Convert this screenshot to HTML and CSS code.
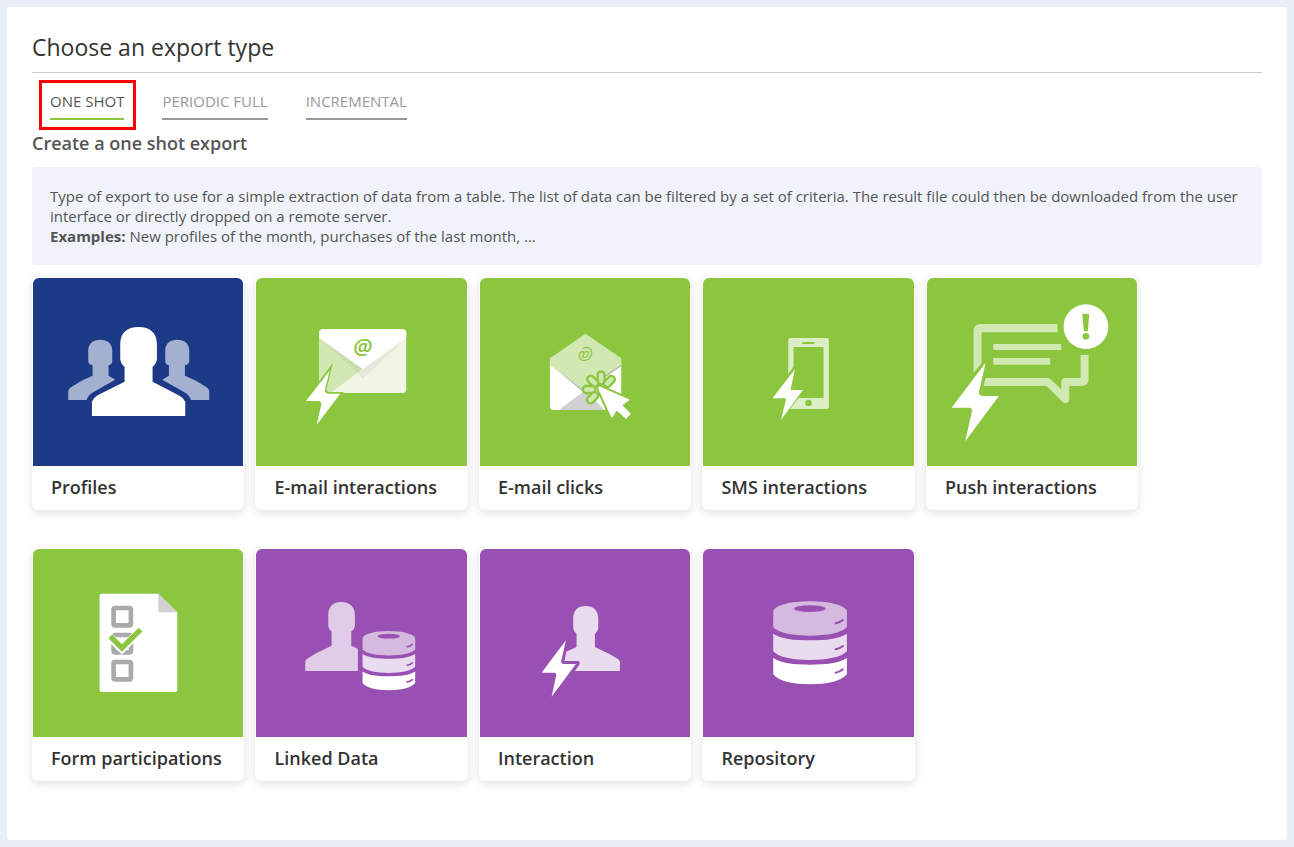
FILE: index.html
```html
<!DOCTYPE html>
<html lang="en">
<head>
<meta charset="utf-8">
<title>Choose an export type</title>
<link rel="stylesheet" href="styles.css">
</head>
<body>
<main class="panel">
  <h1 class="title">Choose an export type</h1>
  <div class="tabs" role="tablist">
    <button class="tab tab-active" type="button" role="tab" aria-selected="true">ONE SHOT</button>
    <button class="tab" type="button" role="tab" aria-selected="false">PERIODIC FULL</button>
    <button class="tab" type="button" role="tab" aria-selected="false">INCREMENTAL</button>
  </div>
  <h2 class="subtitle">Create a one shot export</h2>
  <div class="info">
    <p>Type of export to use for a simple extraction of data from a table. The list of data can be filtered by a set of criteria. The result file could then be downloaded from the user interface or directly dropped on a remote server.</p>
    <p><strong>Examples:</strong> New profiles of the month, purchases of the last month, ...</p>
  </div>
  <ul class="cards">
    <li class="cell"><a class="card" href="#">
      <svg class="art blue" viewBox="9 9 630 564" aria-hidden="true">
        <g fill="#fff" fill-opacity=".6">
          <path d="M174 226C174 206 189 194 210 194S246 206 246 226V259Q246 268 235 271V302L255 314L186 353Q173 361 169 375H114V348Q115 342 122 337L154 317L187 302V271Q174 268 174 259Z"/>
          <path d="M174 226C174 206 189 194 210 194S246 206 246 226V259Q246 268 235 271V302L255 314L186 353Q173 361 169 375H114V348Q115 342 122 337L154 317L187 302V271Q174 268 174 259Z" transform="translate(651 0) scale(-1 1)"/>
        </g>
        <path fill="#fff" d="M270 208C270 174 290 156 325 156S380 174 380 208V252Q379 267 367 275V320L448 362Q461 369 465 380V423H185V380Q189 369 202 361L283 320V275Q271 267 270 252Z"/>
      </svg>
      <span class="label">Profiles</span></a></li>
    <li class="cell"><a class="card" href="#">
      <svg class="art green" viewBox="9 9 630 564" aria-hidden="true">
        <rect x="198" y="163" width="261" height="191" rx="11" fill="#f0f6e6"/>
        <path fill="#d1e8b2" d="M198 189L328 282L232 354H209Q198 354 198 343Z"/>
        <path fill="#c8dcae" d="M198 189L328 280L313 294Z"/>
        <path fill="#e4e9da" d="M459 189L328 311L313 294L328 282Z"/>
        <path fill="#fff" d="M198 189V174Q198 163 209 163H448Q459 163 459 174V189L328 282Z"/>
        <text x="328" y="239" class="at">@</text>
        <path fill="#8cc63f" d="M239 264L198 318V356H268L271 351H229Q219 352 220 343Z"/>
        <path fill="#fff" d="M229 287L158 378H194Q205 379 204 390L190 450L261 356H225Q214 355 215 346Z"/>
      </svg>
      <span class="label">E-mail interactions</span></a></li>
    <li class="cell"><a class="card" href="#">
      <svg class="art green" viewBox="12 9 630 564" aria-hidden="true">
        <path fill="#fff" d="M221 268L322 343L435 268V405H232Q221 405 221 394Z"/>
        <path fill="#d1d1d1" d="M248 405L328 345L385 405Z"/>
        <path fill="#b5b5b5" d="M221 268L322 345L435 268V274L322 352Z"/>
        <path fill="#d1e8b2" d="M221 250L328 176L435 250V270L322 341L221 271Z"/>
        <text x="328" y="252" class="at at-flipped" transform="rotate(180 328 235)">@</text>
        <path fill="#8cc63f" d="M375 336L440 364V409H389Z"/>
        <g fill="#d1e8b2" stroke="#8cc63f" stroke-width="7">
          <rect x="364" y="290" width="21" height="38" rx="10"/>
          <rect x="364" y="290" width="21" height="38" rx="10" transform="rotate(45 374 344)"/>
          <rect x="364" y="290" width="21" height="38" rx="10" transform="rotate(-45 374 344)"/>
          <rect x="364" y="290" width="21" height="38" rx="10" transform="rotate(-90 374 344)"/>
          <rect x="364" y="290" width="21" height="38" rx="10" transform="rotate(-135 374 344)"/>
        </g>
        <path fill="#fff" stroke="#8cc63f" stroke-width="6" stroke-linejoin="round" d="M370 331L459 370Q466 374 461 378L443 391L468 416L449 436L422 411L411 429Q406 434 402 427L363 342Q362 332 370 331Z"/>
      </svg>
      <span class="label">E-mail clicks</span></a></li>
    <li class="cell"><a class="card" href="#">
      <svg class="art green" viewBox="9 9 630 564" aria-hidden="true">
        <path fill="#dceec5" fill-rule="evenodd" d="M270 189H380Q386 189 386 195V396Q386 402 380 402H270Q264 402 264 396V195Q264 189 270 189ZM283 216Q280 216 280 219V366Q280 369 283 369H367Q370 369 370 366V219Q370 216 367 216Z"/>
        <rect x="306" y="201" width="37" height="6" rx="2" fill="#8cc63f"/>
        <circle cx="325" cy="384" r="10" fill="#8cc63f"/>
        <path fill="#8cc63f" d="M286 267L206 374H246L234 446L316 342H280Z"/>
        <path fill="#fff" d="M284 283L217 370H255Q257 371 257 375L242 435L308 345H271Z"/>
      </svg>
      <span class="label">SMS interactions</span></a></li>
    <li class="cell"><a class="card" href="#">
      <svg class="art green" viewBox="9 9 630 564" aria-hidden="true">
        <path fill="#d1e8b2" d="M399 147L401 172H172V264L148 294V165Q150 149 166 147ZM207 207H411V225H207ZM207 249H378V269H207ZM184 309H371Q375 309 379 313L411 343V320Q412 310 422 309H469V240H493V315Q491 331 475 333H435V374Q434 384 424 384Q418 384 414 380L367 333H178Z"/>
        <circle cx="485" cy="155" r="67" fill="#fff"/>
        <path fill="#8cc63f" d="M474 116H495L491 169H479Z"/>
        <circle cx="485" cy="184" r="10" fill="#8cc63f"/>
        <path fill="#fff" d="M184 263L82 398H136Q144 399 143 408L123 499L224 363H174Q163 362 164 352Z"/>
      </svg>
      <span class="label">Push interactions</span></a></li>
    <li class="cell"><a class="card" href="#">
      <svg class="art green" viewBox="9 9 630 564" aria-hidden="true">
        <path fill="#fff" d="M214 143H384L441 199V432Q441 438 435 438H214Q208 438 208 432V149Q208 143 214 143Z"/>
        <path fill="#d1d1d1" d="M384 143L441 199H392Q384 199 384 191Z"/>
        <g fill="none" stroke="#aaa" stroke-width="14">
          <rect x="250" y="186" width="52" height="52" rx="5"/>
          <rect x="250" y="267" width="52" height="52" rx="5"/>
          <rect x="250" y="348" width="52" height="52" rx="5"/>
        </g>
        <path fill="none" stroke="#fff" stroke-width="24" d="M236 271L275 309L338 246"/>
        <path fill="none" stroke="#8cc63f" stroke-width="16" d="M240 271L275 306L331 251"/>
      </svg>
      <span class="label">Form participations</span></a></li>
    <li class="cell"><a class="card" href="#">
      <svg class="art purple" viewBox="9 9 630 564" aria-hidden="true">
        <path fill="#e1cce7" d="M225 207C225 182 240 168 264 168S305 182 305 207V240Q304 249 294 257V299L314 308V375H156V346Q157 341 164 337L190 321L235 299V257Q226 249 225 240Z"/>
        <g transform="translate(328 255) scale(.714)">
          <path fill="#d5b9df" d="M0 28C8 12 50 0 110 0S212 12 221 28V78C204 96 160 103 110 103S16 96 0 78Z"/>
          <path fill="#eadcef" d="M0 97C24 112 60 117 110 117S196 112 221 97V150C204 168 160 176 110 176S16 168 0 150Z"/>
          <path fill="#fff" d="M0 170C24 186 60 190 110 190S196 186 221 170V219C204 240 160 249 110 249S16 240 0 219Z"/>
          <ellipse cx="110" cy="22" rx="47" ry="10" fill="#9850b2"/>
          <path fill="none" stroke="#9850b2" stroke-width="7" stroke-linecap="round" d="M187 66Q200 64 209 56M187 144Q200 142 209 134M187 214Q200 212 209 204"/>
        </g>
      </svg>
      <span class="label">Linked Data</span></a></li>
    <li class="cell"><a class="card" href="#">
      <svg class="art purple" viewBox="12 9 630 564" aria-hidden="true">
        <path fill="#eadcef" d="M291 217C291 193 305 180 328 180S366 193 366 217V247Q365 257 356 264V303L398 323L424 338Q430 342 431 347V375H296L309 356Q314 346 304 345H265L270 317L301 303V264Q292 257 291 247Z"/>
        <path fill="#fff" d="M269 283L196 380H235Q241 381 240 388L226 452L299 354H263Q254 353 255 346Z"/>
      </svg>
      <span class="label">Interaction</span></a></li>
    <li class="cell"><a class="card" href="#">
      <svg class="art purple" viewBox="9 9 630 564" aria-hidden="true">
        <g transform="translate(219 166)">
          <path fill="#d5b9df" d="M0 28C8 12 50 0 110 0S212 12 221 28V78C204 96 160 103 110 103S16 96 0 78Z"/>
          <path fill="#eadcef" d="M0 97C24 112 60 117 110 117S196 112 221 97V150C204 168 160 176 110 176S16 168 0 150Z"/>
          <path fill="#fff" d="M0 170C24 186 60 190 110 190S196 186 221 170V219C204 240 160 249 110 249S16 240 0 219Z"/>
          <ellipse cx="110" cy="22" rx="47" ry="10" fill="#9850b2"/>
          <path fill="none" stroke="#9850b2" stroke-width="6" stroke-linecap="round" d="M187 66Q200 64 209 56M187 144Q200 142 209 134M187 214Q200 212 209 204"/>
        </g>
      </svg>
      <span class="label">Repository</span></a></li>
  </ul>
</main>
</body>
</html>
```
FILE: styles.css
```css
* { box-sizing: border-box; }

body {
  margin: 0;
  padding: 7px;
  min-height: 100vh;
  display: flex;
  background: #eaeff7;
  color: #555;
  font-family: "Open Sans", "Noto Sans", sans-serif;
  font-size: 15px;
  line-height: 20px;
}

.panel {
  flex: 1;
  min-width: 0;
  padding: 24px 25px;
  background: #fff;
  border-radius: 4px;
}

.title {
  margin: 0;
  padding-bottom: 9px;
  border-bottom: 1px solid #ccc;
  color: #333;
  font-size: 23px;
  font-weight: 400;
  line-height: 32px;
}

.tabs {
  display: flex;
  gap: 38px;
  padding: 18px 18px 0;
}

.tab {
  position: relative;
  padding: 0 0 7px;
  border: 0;
  border-bottom: 2px solid #999;
  background: none;
  color: #999;
  font: inherit;
  cursor: pointer;
}

.tab-active {
  border-color: #8cc63f;
  color: #555;
}

/* Highlight frame round the current tab */
.tab-active::after {
  content: "";
  position: absolute;
  inset: -11px -12px -12px -11px;
  border: 3px solid #f00;
}

.subtitle {
  margin: 11px 0 12px;
  font-size: 18px;
  font-weight: 600;
  line-height: 24px;
}

.info {
  padding: 19px 18px;
  border-radius: 4px;
  background: #f0f3f9;
}

.info p { margin: 0; }

.cards {
  display: flex;
  flex-wrap: wrap;
  row-gap: 38px;
  margin: 12px 0 0;
  padding: 0;
  list-style: none;
}

.cell {
  width: 18.17%;
  padding-right: 11px;
}

.card {
  display: block;
  padding: 1px;
  border-radius: 6px;
  background: #fff;
  box-shadow: 0 3px 10px rgba(0, 0, 0, .12);
  color: #333;
  text-decoration: none;
}

.art {
  display: block;
  width: 100%;
  height: 188px;
  border-radius: 6px 6px 0 0;
}

.blue { background: #1d3a87; }
.green { background: #8cc63f; }
.purple { background: #9850b2; }

.label {
  display: block;
  padding: 9px 18px 10px;
  font-size: 18px;
  font-weight: 600;
  line-height: 24px;
}

.at {
  fill: #8cc63f;
  font-size: 66px;
  font-style: italic;
  font-weight: 600;
  text-anchor: middle;
}

.at-flipped {
  font-size: 52px;
  font-weight: 400;
}
```
